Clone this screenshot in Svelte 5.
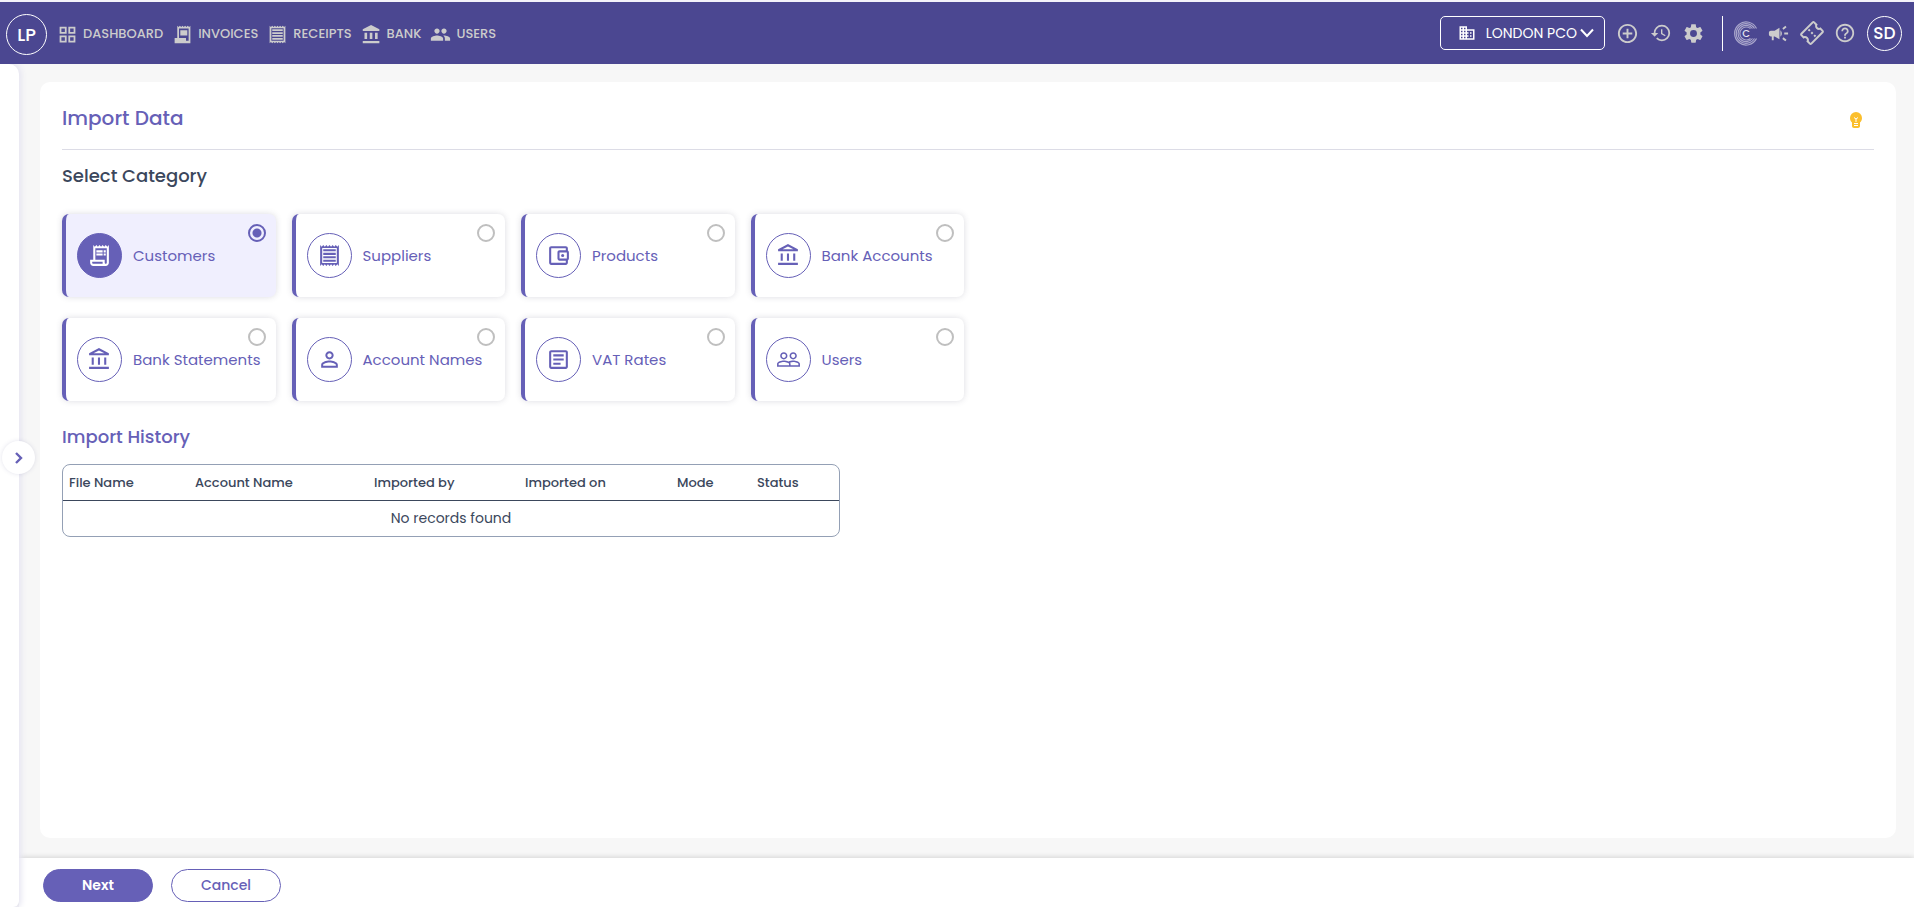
<script>
  const icons = {
    grid: 'M3 3v8h8V3H3zm6 6H5V5h4v4zm-6 4v8h8v-8H3zm6 6H5v-4h4v4zm4-16v8h8V3h-8zm6 6h-4V5h4v4zm-6 4v8h8v-8h-8zm6 6h-4v-4h4v4z',
    invoice: 'M19.5 3.5 18 2l-1.5 1.5L15 2l-1.5 1.5L12 2l-1.5 1.5L9 2 7.5 3.5 6 2v14H3v6h18V2l-1.5 1.5zM19 19h-3v-3H8V5h11v14zM9.5 7h8v6h-8z',
    invoiceOutline: 'M19.5 3.5 18 2l-1.5 1.5L15 2l-1.5 1.5L12 2l-1.5 1.5L9 2 7.5 3.5 6 2v14H3v3c0 1.66 1.34 3 3 3h12c1.66 0 3-1.34 3-3V2l-1.5 1.5zM15 20H6c-.55 0-1-.45-1-1v-1h10v2zm4-1c0 .55-.45 1-1 1s-1-.45-1-1v-3H8V5h11v14zM9 7h6v2H9zM16 7h2v2h-2zM9 10h6v2H9zM16 10h2v2h-2z',
    receipt: 'M19.5 3.5 18 2l-1.5 1.5L15 2l-1.5 1.5L12 2l-1.5 1.5L9 2 7.5 3.5 6 2 4.5 3.5 3 2v20l1.5-1.5L6 22l1.5-1.5L9 22l1.5-1.5L12 22l1.5-1.5L15 22l1.5-1.5L18 22l1.5-1.5L21 22V2l-1.5 1.5zM19 19.2H5V4.8h14v14.4zM6 6h12v2H6zm0 3.4h12v2H6zm0 3.3h12v2H6zm0 3.3h12v2H6z',
    bank: 'M4 10v7h3v-7H4zm6 0v7h3v-7h-3zM2 22h19v-2.5H2V22zm14-12v7h3v-7h-3zm-4.5-9L2 6v2h19V6l-9.5-5z',
    bankOutline: 'M6.5 10h-2v7h2v-7zm6 0h-2v7h2v-7zm8.5 9H2v2h19v-2zm-2.5-9h-2v7h2v-7zm-7-6.74L16.71 6H6.29l5.21-2.74m0-2.26L2 6v2h19V6l-9.5-5z',
    people: 'M16 11c1.66 0 2.99-1.34 2.99-3S17.66 5 16 5c-1.66 0-3 1.34-3 3s1.34 3 3 3zm-8 0c1.66 0 2.99-1.34 2.99-3S9.66 5 8 5C6.34 5 5 6.34 5 8s1.34 3 3 3zm0 2c-2.33 0-7 1.17-7 3.5V19h14v-2.5c0-2.33-4.67-3.5-7-3.5zm8 0c-.29 0-.62.02-.97.05 1.16.84 1.97 1.97 1.97 3.45V19h6v-2.5c0-2.33-4.67-3.5-7-3.5z',
    peopleOutline: 'M16.5 13c-1.2 0-3.07.34-4.5 1-1.43-.67-3.3-1-4.5-1C5.33 13 1 14.08 1 16.25V19h22v-2.75c0-2.17-4.33-3.25-6.5-3.25zm-4 4.5h-10v-1.25c0-.54 2.56-1.75 5-1.75s5 1.21 5 1.75v1.25zm9 0H14v-1.25c0-.46-.2-.86-.52-1.22.88-.3 1.96-.53 3.02-.53 2.44 0 5 1.21 5 1.75v1.25zM7.5 12c1.93 0 3.5-1.57 3.5-3.5S9.43 5 7.5 5 4 6.57 4 8.5 5.57 12 7.5 12zm0-5.5c1.1 0 2 .9 2 2s-.9 2-2 2-2-.9-2-2 .9-2 2-2zm9 5.5c1.93 0 3.5-1.57 3.5-3.5S18.43 5 16.5 5 13 6.57 13 8.5s1.57 3.5 3.5 3.5zm0-5.5c1.1 0 2 .9 2 2s-.9 2-2 2-2-.9-2-2 .9-2 2-2z',
    wallet: 'M21 7.28V5c0-1.1-.9-2-2-2H5c-1.11 0-2 .9-2 2v14c0 1.1.89 2 2 2h14c1.1 0 2-.9 2-2v-2.28A2 2 0 0 0 22 15V9a2 2 0 0 0-1-1.72zM20 9v6h-7V9h7zM5 19V5h14v2h-6c-1.1 0-2 .9-2 2v6c0 1.1.9 2 2 2h6v2H5zM16 10.5a1.5 1.5 0 1 0 0 3 1.5 1.5 0 0 0 0-3z',
    person: 'M12 5.9c1.16 0 2.1.94 2.1 2.1s-.94 2.1-2.1 2.1S9.9 9.16 9.9 8s.94-2.1 2.1-2.1m0 9c2.97 0 6.1 1.46 6.1 2.1v1.1H5.9V17c0-.64 3.13-2.1 6.1-2.1M12 4C9.79 4 8 5.79 8 8s1.79 4 4 4 4-1.79 4-4-1.79-4-4-4zm0 9c-2.67 0-8 1.34-8 4v3h16v-3c0-2.66-5.33-4-8-4z',
    article: 'M19 5v14H5V5h14m0-2H5c-1.1 0-2 .9-2 2v14c0 1.1.9 2 2 2h14c1.1 0 2-.9 2-2V5c0-1.1-.9-2-2-2zM14 17H7v-2h7v2zm3-4H7v-2h10v2zm0-4H7V7h10v2z',
    building: 'M12 7V3H2v18h20V7H12zM6 19H4v-2h2v2zm0-4H4v-2h2v2zm0-4H4V9h2v2zm0-4H4V5h2v2zm4 12H8v-2h2v2zm0-4H8v-2h2v2zm0-4H8V9h2v2zm0-4H8V5h2v2zm10 12h-8v-2h2v-2h-2v-2h2v-2h-2V9h8v10zm-2-8h-2v2h2v-2zm0 4h-2v2h2v-2z',
    add: 'M13 7h-2v4H7v2h4v4h2v-4h4v-2h-4V7zm-1-5C6.48 2 2 6.48 2 12s4.48 10 10 10 10-4.48 10-10S17.52 2 12 2zm0 18c-4.41 0-8-3.59-8-8s3.59-8 8-8 8 3.59 8 8-3.59 8-8 8z',
    history: 'M13 3a9 9 0 0 0-9 9H1l3.89 3.89.07.14L9 12H6c0-3.87 3.13-7 7-7s7 3.13 7 7-3.13 7-7 7c-1.93 0-3.68-.79-4.94-2.06l-1.42 1.42A8.954 8.954 0 0 0 13 21a9 9 0 0 0 0-18zm-1 5v5l4.28 2.54.72-1.21-3.5-2.08V8H12z',
    settings: 'M19.14 12.94c.04-.3.06-.61.06-.94 0-.32-.02-.64-.07-.94l2.03-1.58c.18-.14.23-.41.12-.61l-1.92-3.32c-.12-.22-.37-.29-.59-.22l-2.39.96c-.5-.38-1.03-.7-1.62-.94l-.36-2.54c-.04-.24-.24-.41-.48-.41h-3.84c-.24 0-.43.17-.47.41l-.36 2.54c-.59.24-1.13.57-1.62.94l-2.39-.96c-.22-.08-.47 0-.59.22L2.74 8.87c-.12.21-.08.47.12.61l2.03 1.58c-.05.3-.09.63-.09.94s.02.64.07.94l-2.03 1.58c-.18.14-.23.41-.12.61l1.92 3.32c.12.22.37.29.59.22l2.39-.96c.5.38 1.03.7 1.62.94l.36 2.54c.05.24.24.41.48.41h3.84c.24 0 .44-.17.47-.41l.36-2.54c.59-.24 1.13-.56 1.62-.94l2.39.96c.22.08.47 0 .59-.22l1.92-3.32c.12-.22.07-.47-.12-.61l-2.01-1.58zM12 15.6A3.6 3.6 0 1 1 12 8.4a3.6 3.6 0 0 1 0 7.2z',
    campaign: 'M18 11v2h4v-2h-4zm-2 6.61c.96.71 2.21 1.65 3.2 2.39.4-.53.8-1.07 1.2-1.6-.99-.74-2.24-1.68-3.2-2.4-.4.54-.8 1.08-1.2 1.61zM20.4 5.6c-.4-.53-.8-1.07-1.2-1.6-.99.74-2.24 1.68-3.2 2.4.4.53.8 1.07 1.2 1.6.96-.72 2.21-1.65 3.2-2.4zM4 9c-1.1 0-2 .9-2 2v2c0 1.1.9 2 2 2h1v4h2v-4h1l5 3V6L8 9H4zm11.5 3c0-1.33-.58-2.53-1.5-3.35v6.69c.92-.81 1.5-2.01 1.5-3.34z',
    ticket: 'M22 10V6c0-1.11-.9-2-2-2H4c-1.1 0-1.99.89-1.99 2v4c1.1 0 1.99.9 1.99 2s-.89 2-2 2v4c0 1.1.9 2 2 2h16c1.1 0 2-.9 2-2v-4c-1.1 0-2-.9-2-2s.9-2 2-2zm-2-1.46c-1.19.69-2 1.99-2 3.46s.81 2.77 2 3.46V18H4v-2.54c1.19-.69 2-1.99 2-3.46 0-1.48-.8-2.77-1.99-3.46L4 6h16v2.54zM11 15h2v2h-2zm0-4h2v2h-2zm0-4h2v2h-2z',
    help: 'M11 18h2v-2h-2v2zm1-16C6.48 2 2 6.48 2 12s4.48 10 10 10 10-4.48 10-10S17.52 2 12 2zm0 18c-4.41 0-8-3.59-8-8s3.59-8 8-8 8 3.59 8 8-3.59 8-8 8zm0-14c-2.21 0-4 1.79-4 4h2c0-1.1.9-2 2-2s2 .9 2 2c0 2-3 1.75-3 5h2c0-2.25 3-2.5 3-5 0-2.21-1.79-4-4-4z'
  };

  const nav = [
    { label: 'DASHBOARD', icon: 'grid' },
    { label: 'INVOICES', icon: 'invoice' },
    { label: 'RECEIPTS', icon: 'receipt' },
    { label: 'BANK', icon: 'bank' },
    { label: 'USERS', icon: 'people' }
  ];

  const categories = [
    { label: 'Customers', icon: 'invoiceOutline' },
    { label: 'Suppliers', icon: 'receipt' },
    { label: 'Products', icon: 'wallet' },
    { label: 'Bank Accounts', icon: 'bankOutline' },
    { label: 'Bank Statements', icon: 'bankOutline' },
    { label: 'Account Names', icon: 'person' },
    { label: 'VAT Rates', icon: 'article' },
    { label: 'Users', icon: 'peopleOutline' }
  ];

  const columns = [
    { label: 'File Name', width: 126 },
    { label: 'Account Name', width: 179 },
    { label: 'Imported by', width: 151 },
    { label: 'Imported on', width: 152 },
    { label: 'Mode', width: 80 },
    { label: 'Status', width: 88 }
  ];

  let selected = $state('Customers');
</script>

{#snippet icon(name, size)}
  <svg width={size} height={size} viewBox="0 0 24 24" fill="currentColor" fill-rule="evenodd" aria-hidden="true">
    <path d={icons[name]} transform={name === 'ticket' ? 'rotate(-45 12 12)' : undefined} />
  </svg>
{/snippet}

<div class="app">
  <header>
    <a class="avatar brand" href="#home">LP</a>
    <nav>
      {#each nav as item}
        <a href="#{item.label.toLowerCase()}">{@render icon(item.icon, 21)}<span>{item.label}</span></a>
      {/each}
    </nav>

    <div class="tools">
      <button class="company">
        {@render icon('building', 18)}
        <span>LONDON PCO</span>
        <svg class="caret" width="14" height="10" viewBox="0 0 14 10" fill="none" stroke="currentColor" stroke-width="2" aria-hidden="true"><path d="M1 1.5 7 8l6-6.5" /></svg>
      </button>
      <div class="tool-group">
        <button class="tool" aria-label="Add">{@render icon('add', 23)}</button>
        <button class="tool" aria-label="History">{@render icon('history', 22)}</button>
        <button class="tool" aria-label="Settings">{@render icon('settings', 23)}</button>
      </div>
      <div class="tool-group divided">
        <button class="tool" aria-label="Capium">
          <svg width="25" height="25" viewBox="0 0 25 25" fill="none" stroke="#aaa7cc" stroke-width="1.2" aria-hidden="true">
            <path d="M23.5 7.500A11.500 11.500 0 1 0 23.500 17.500" />
            <path d="M21.500 7.500A9.800 9.800 0 1 0 21.500 17.500" />
            <path d="M19.500 7.500A8.100 8.100 0 1 0 19.500 17.500" />
            <path d="M17.500 7.500A6.500 6.500 0 1 0 17.500 17.500" />
            <text x="13" y="16" text-anchor="middle" font-size="10" font-weight="500" fill="#e8e7f2" stroke="none">C</text>
          </svg>
        </button>
        <button class="tool" aria-label="Announcements">{@render icon('campaign', 23)}</button>
        <button class="tool" aria-label="Tickets">{@render icon('ticket', 24)}</button>
        <button class="tool" aria-label="Help">{@render icon('help', 22)}</button>
      </div>
      <button class="avatar user">SD</button>
    </div>
  </header>

  <div class="body">
    <aside>
      <button class="expand" aria-label="Expand menu">
        <svg width="8" height="12" viewBox="0 0 8 12" fill="none" stroke="currentColor" stroke-width="2.4" aria-hidden="true"><path d="m1 1 5 5-5 5" /></svg>
      </button>
    </aside>

    <div class="content">
      <main>
        <div class="title-bar">
          <h1>Import Data</h1>
          <button class="hint" aria-label="Tips">
            <svg width="12" height="16" viewBox="0 0 12 16" aria-hidden="true">
              <path fill="#fbbf2d" d="M6 0a6 6 0 0 0-6 6c0 2 1 3.5 2 4.5V14c0 1 .8 2 2 2h4c1.2 0 2-1 2-2v-3.5c1-1 2-2.5 2-4.5a6 6 0 0 0-6-6z" />
              <path fill="none" stroke="#fff" d="m4 5.5 2 1.5 2-1.5M6 7v3M4 11.5h4M4 13.5h4" />
            </svg>
          </button>
        </div>

        <h2>Select Category</h2>
        <div class="categories">
          {#each categories as category}
            <label class="category" class:active={selected === category.label}>
              <span class="badge">{@render icon(category.icon, 25)}</span>
              <span>{category.label}</span>
              <input type="radio" name="category" value={category.label} bind:group={selected} />
            </label>
          {/each}
        </div>

        <h2 class="history">Import History</h2>
        <div class="table-wrap">
          <table>
            <thead>
              <tr>
                {#each columns as column}
                  <th style:width="{column.width}px">{column.label}</th>
                {/each}
              </tr>
            </thead>
            <tbody>
              <tr><td colspan={columns.length}>No records found</td></tr>
            </tbody>
          </table>
        </div>
      </main>

      <footer>
        <button class="btn primary">Next</button>
        <button class="btn">Cancel</button>
      </footer>
    </div>
  </div>
</div>

<style>
  :global(body) {
    background: #f7f7f7;
  }

  .app {
    --accent: #6660b7;
    display: flex;
    flex-direction: column;
    min-height: 100vh;
    font-family: Poppins, Inter, sans-serif;
    color: #3b475c;
  }

  button {
    font: inherit;
    color: inherit;
    background: none;
    border: 0;
    padding: 0;
    cursor: pointer;
  }

  a {
    color: inherit;
    text-decoration: none;
  }

  svg {
    display: block;
    flex: none;
  }

  header {
    display: flex;
    align-items: center;
    justify-content: space-between;
    box-sizing: border-box;
    height: 64px;
    padding: 2px 12px 0 6px;
    border-top: 2px solid #f3f2fa;
    background: #4b4791;
    color: #ccc;
  }

  .avatar {
    display: flex;
    align-items: center;
    justify-content: center;
    box-sizing: border-box;
    border: 1px solid #fff;
    border-radius: 50%;
    color: #fff;
    font-weight: 500;
  }

  .brand {
    width: 41px;
    height: 41px;
    font-size: 18px;
  }

  .user {
    width: 35px;
    height: 35px;
    font-size: 17px;
  }

  nav {
    display: flex;
    gap: 9px;
    margin-left: 10px;
    margin-right: auto;
  }

  nav a {
    display: flex;
    align-items: center;
    gap: 5px;
    font-size: 13px;
    font-weight: 500;
  }

  .tools {
    display: flex;
    align-items: center;
    gap: 12px;
    padding-bottom: 2px;
  }

  .company {
    display: flex;
    align-items: center;
    box-sizing: border-box;
    height: 34px;
    width: 165px;
    padding: 0 10px 0 17px;
    border: 1px solid #fff;
    border-radius: 5px;
    color: #fff;
    font-size: 14px;
  }

  .company span {
    margin-left: auto;
  }

  .company .caret {
    margin-left: 3px;
  }

  .tool-group {
    display: flex;
    align-items: center;
  }

  .tool {
    display: flex;
    align-items: center;
    justify-content: center;
    width: 33px;
    height: 35px;
  }

  .tool-group:not(.divided) {
    margin-left: -6px;
  }

  .divided {
    border-left: 1px solid #fff;
    padding-left: 6px;
    margin-right: -6px;
  }

  .body {
    display: flex;
    flex: 1;
  }

  aside {
    position: relative;
    z-index: 1;
    width: 19px;
    background: #fff;
    border-radius: 0 10px 6px 0;
    box-shadow: 0 0 6px 2px #e4e3f0;
    clip-path: inset(0 -20px 0 0);
  }

  /* sits on the edge of the collapsed side menu */
  .expand {
    position: absolute;
    top: 377px;
    left: 2px;
    display: flex;
    align-items: center;
    justify-content: center;
    width: 33px;
    height: 33px;
    border-radius: 50%;
    background: #fff;
    box-shadow: 0 0 4px rgba(70, 66, 130, 0.15);
    color: var(--accent);
  }

  .content {
    display: flex;
    flex: 1;
    flex-direction: column;
  }

  main {
    flex: 1;
    margin: 18px 18px 20px 21px;
    padding: 18px 22px;
    border-radius: 10px;
    background: #fff;
  }

  .title-bar {
    display: flex;
    align-items: center;
    justify-content: space-between;
    height: 49px;
    padding-right: 12px;
    border-bottom: 1px solid #dcdce6;
    margin-bottom: 12px;
  }

  h1,
  h2 {
    margin: 0;
    font-weight: 500;
  }

  h1 {
    margin-bottom: 14px;
    font-size: 20px;
    line-height: 30px;
    color: var(--accent);
  }

  .hint {
    margin-bottom: 10px;
  }

  h2 {
    font-size: 18px;
    line-height: 28px;
  }

  .history {
    color: var(--accent);
    margin: 22px 0 13px;
  }

  .categories {
    display: grid;
    grid-template-columns: repeat(4, 1fr);
    gap: 21px 16px;
    max-width: 902px;
    margin-top: 24px;
  }

  .category {
    position: relative;
    display: flex;
    align-items: center;
    gap: 11px;
    box-sizing: border-box;
    height: 83px;
    padding-left: 11px;
    border-left: 4px solid var(--accent);
    border-radius: 7px;
    box-shadow: 0 0 6px rgba(60, 60, 90, 0.18);
    color: var(--accent);
    font-size: 15px;
    cursor: pointer;
  }

  .badge {
    display: flex;
    align-items: center;
    justify-content: center;
    box-sizing: border-box;
    width: 45px;
    height: 45px;
    border: 1px solid var(--accent);
    border-radius: 50%;
  }

  .active {
    background: #f0effe;
  }

  .active .badge {
    background: var(--accent);
    color: #fff;
  }

  .category input {
    appearance: none;
    position: absolute;
    top: 10px;
    right: 10px;
    box-sizing: border-box;
    width: 18px;
    height: 18px;
    margin: 0;
    border: 2px solid #bfbfbf;
    border-radius: 50%;
  }

  .category input:checked {
    border-color: var(--accent);
    background: radial-gradient(circle, var(--accent) 4px, transparent 5px);
  }

  .table-wrap {
    box-sizing: border-box;
    width: 778px;
    max-width: 100%;
    border: 1px solid #94a0b5;
    border-radius: 8px;
    overflow: hidden;
  }

  table {
    width: 100%;
    table-layout: fixed;
    border-collapse: collapse;
    line-height: 20px;
  }

  th {
    box-sizing: border-box;
    padding: 8px 6px 7px;
    border-bottom: 1px solid #3b475c;
    font-size: 13px;
    font-weight: 500;
    text-align: left;
  }

  td {
    padding: 7px 6px 8px;
    font-size: 14px;
    text-align: center;
  }

  footer {
    display: flex;
    align-items: center;
    gap: 18px;
    box-sizing: border-box;
    height: 49px;
    padding: 6px 24px 0;
    background: #fff;
    box-shadow: 0 -1px 5px rgba(0, 0, 0, 0.14);
  }

  .btn {
    box-sizing: border-box;
    width: 110px;
    height: 33px;
    border: 1px solid var(--accent);
    border-radius: 17px;
    color: var(--accent);
    font-size: 14px;
    font-weight: 500;
  }

  .primary {
    background: var(--accent);
    color: #fff;
    font-weight: 600;
  }
</style>
